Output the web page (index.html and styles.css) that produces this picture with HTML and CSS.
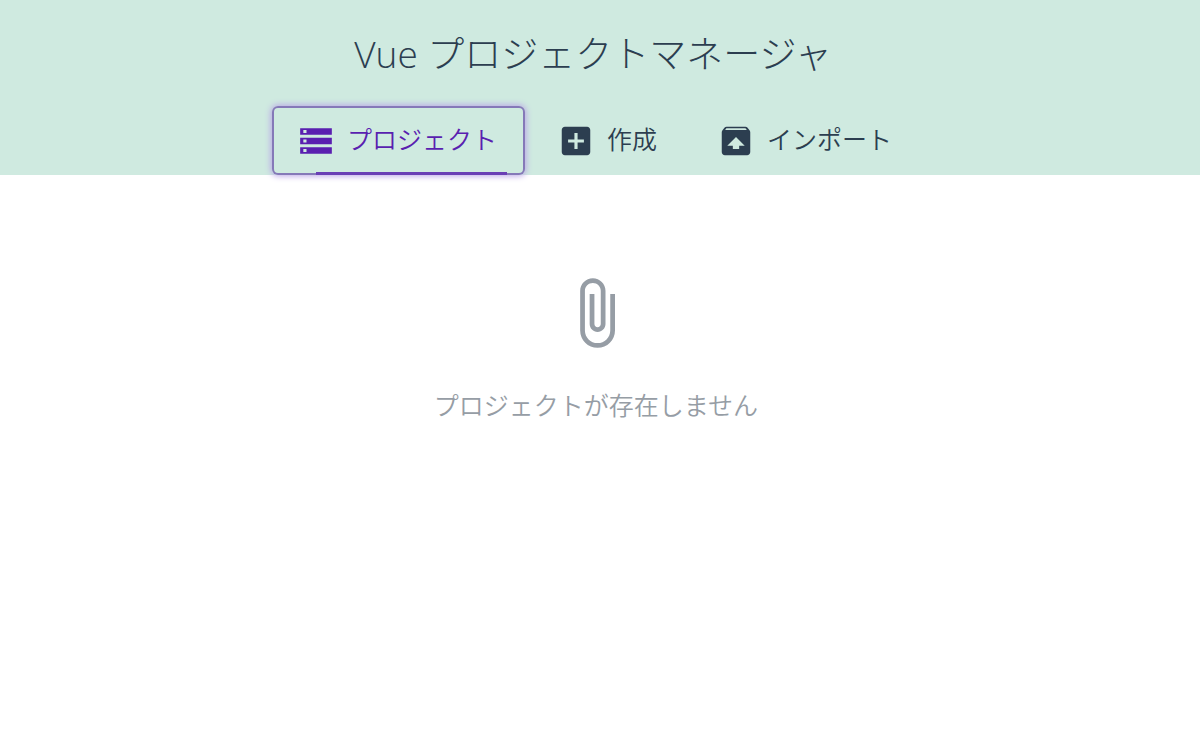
FILE: index.html
```html
<!DOCTYPE html>
<html lang="ja">
<head>
<meta charset="utf-8">
<meta name="viewport" content="width=device-width, initial-scale=1">
<title>Vue プロジェクトマネージャ</title>
<link rel="stylesheet" href="styles.css">
</head>
<body>
<header class="header">
  <h1 class="title">Vue プロジェクトマネージャ</h1>
  <nav class="tabs">
    <button class="tab tab-active" type="button">
      <svg class="icon" viewBox="0 0 24 24" aria-hidden="true"><path d="M2 20h20v-4H2v4zm2-3h2v2H4v-2zM2 4v4h20V4H2zm4 3H4V5h2v2zm-4 7h20v-4H2v4zm2-3h2v2H4v-2z"/></svg>
      <span>プロジェクト</span>
    </button>
    <button class="tab" type="button">
      <svg class="icon" viewBox="0 0 24 24" aria-hidden="true"><path d="M19 3H5c-1.110 0-2 .9-2 2v14c0 1.100.89 2 2 2h14c1.100 0 2-.9 2-2V5c0-1.100-.9-2-2-2zm-2 10h-4v4h-2v-4H7v-2h4V7h2v4h4v2z"/></svg>
      <span>作成</span>
    </button>
    <button class="tab" type="button">
      <svg class="icon" viewBox="0 0 24 24" aria-hidden="true"><path d="M20.550 5.220l-1.390-1.680C18.880 3.210 18.470 3 18 3H6c-.47 0-.88.21-1.150.55L3.460 5.220C3.170 5.570 3 6.010 3 6.500V19c0 1.100.89 2 2 2h14c1.100 0 2-.9 2-2V6.500c0-.49-.17-.93-.45-1.280zM12 9.500l5.500 5.500H14v2h-4v-2H6.500L12 9.500zM5.120 5l.82-1h12l.93 1H5.120z"/></svg>
      <span>インポート</span>
    </button>
  </nav>
</header>
<main class="empty">
  <svg class="empty-icon" viewBox="0 0 24 24" aria-hidden="true"><path d="M16.500 6v11.500c0 2.210-1.790 4-4 4s-4-1.790-4-4V5c0-1.380 1.120-2.500 2.500-2.500s2.500 1.120 2.500 2.500v10.500c0 .55-.45 1-1 1s-1-.45-1-1V6H10v9.500c0 1.380 1.120 2.500 2.500 2.500s2.500-1.120 2.500-2.500V5c0-2.210-1.790-4-4-4S7 2.790 7 5v12.500c0 3.040 2.460 5.500 5.500 5.500s5.500-2.460 5.500-5.500V6h-1.500z"/></svg>
  <p class="empty-text">プロジェクトが存在しません</p>
</main>
</body>
</html>
```
FILE: styles.css
```css
* {
  box-sizing: border-box;
}

body {
  margin: 0;
  background: #fff;
  color: #2c3e50;
  font-family: "Open Sans", "Noto Sans CJK JP", sans-serif;
  font-weight: 350;
}

.header {
  display: flex;
  flex-direction: column;
  align-items: center;
  padding: 26px 8px 0 0;
  background: #cfeae0;
}

.title {
  margin: 0 0 24px;
  padding-right: 6px;
  font-size: 37px;
  font-weight: 300;
  line-height: 56px;
}

.tabs {
  display: flex;
  gap: 7px;
}

.tab {
  position: relative;
  display: flex;
  align-items: center;
  gap: 12px;
  height: 69px;
  padding: 0 28px 0 25px;
  border: 0;
  border-radius: 6px;
  background: none;
  color: inherit;
  font: inherit;
  font-size: 25px;
  line-height: 36px;
}

.tab span {
  margin-bottom: 4px;
}

.tab-active {
  color: #5a1fb0;
  box-shadow: inset 0 0 0 2px #8579b8, 0 0 6px 1px #b9a3e6;
}

.tab-active::after {
  content: "";
  position: absolute;
  right: 18px;
  bottom: 0;
  left: 44px;
  height: 3px;
  background: #6a3fb5;
}

.icon {
  width: 38px;
  height: 38px;
  fill: currentColor;
}

.empty {
  display: flex;
  flex-direction: column;
  align-items: center;
  gap: 36px;
  padding: 100px 8px 0 0;
  color: #969da5;
}

.empty-icon {
  width: 76px;
  height: 76px;
  fill: currentColor;
}

.empty-text {
  margin: 0;
  font-size: 25px;
  line-height: 36px;
}
```
